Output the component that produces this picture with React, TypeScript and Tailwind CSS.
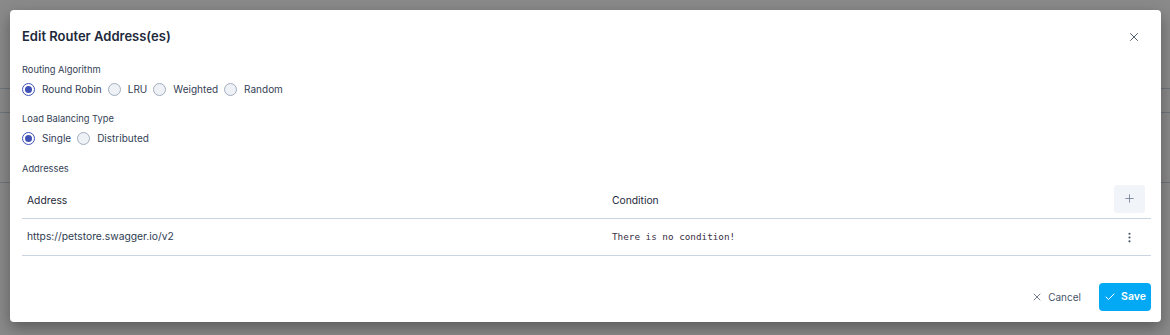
import { X, Plus, EllipsisVertical, Check } from "lucide-react";

const algorithms = ["Round Robin", "LRU", "Weighted", "Random"];
const balancing = ["Single", "Distributed"];

function Radio({ label, checked }: { label: string; checked?: boolean }) {
  return (
    <label className="flex items-center gap-[7px] mr-[6px]">
      <span
        className={
          checked
            ? "w-[13px] h-[13px] rounded-full border border-[#3f51b5] bg-white flex items-center justify-center"
            : "w-[13px] h-[13px] rounded-full border border-[#a3adbd] bg-[#eef2f7]"
        }
      >
        {checked && <span className="w-[7px] h-[7px] rounded-full bg-[#3f51b5]" />}
      </span>
      <span className="text-[10px] text-[#334155]">{label}</span>
    </label>
  );
}

export default function App() {
  return (
    <div className="relative w-[1170px] h-[335px] overflow-hidden bg-[#8a8a8a] font-['Inter',sans-serif]">
      {/* page behind the overlay */}
      <div className="absolute left-0 right-0 top-[88px] h-px bg-[#6f747b]" />
      <div className="absolute left-0 right-0 top-[112px] h-px bg-[#6f747b]" />
      <div className="absolute left-0 right-0 top-[182px] h-px bg-[#6f747b]" />

      <div className="relative ml-[10px] mt-[10px] w-[1151px] h-[312px] bg-white rounded-[4px] shadow-[0_6px_16px_rgba(0,0,0,0.35)] pl-[12px] pr-[10px]">
        {/* Header */}
        <div className="h-[54px] flex items-center justify-between">
          <h2 className="text-[13px] font-semibold text-[#1e293b]">Edit Router Address(es)</h2>
          <button className="mr-[10px] text-[#475569]">
            <X size={14} strokeWidth={1.6} />
          </button>
        </div>

        <div className="h-[12px] leading-[12px] text-[9.3px] text-[#334155]">Routing Algorithm</div>
        <div className="mt-[3px] h-[20px] flex items-center">
          {algorithms.map((a, i) => (
            <Radio key={a} label={a} checked={i === 0} />
          ))}
        </div>

        <div className="mt-[14px] h-[12px] leading-[12px] text-[9.3px] text-[#334155]">Load Balancing Type</div>
        <div className="mt-[3px] h-[20px] flex items-center">
          {balancing.map((a, i) => (
            <Radio key={a} label={a} checked={i === 0} />
          ))}
        </div>

        <div className="mt-[15px] h-[12px] leading-[12px] text-[9.3px] text-[#334155]">Addresses</div>

        {/* Table */}
        <div className="mt-[10px]">
          <div className="h-[34px] flex items-center border-b border-[#cbd5e1] pl-[5px] pr-[6px] pb-[1px]">
            <div className="w-[585px] text-[10.3px] text-[#1e293b]">Address</div>
            <div className="flex-1 text-[10.3px] text-[#1e293b]">Condition</div>
            <button className="w-[31px] h-[28px] rounded-[3px] bg-[#f1f5f9] flex items-center justify-center text-[#64748b] -mt-[5px]">
              <Plus size={13} strokeWidth={1.4} />
            </button>
          </div>
          <div className="h-[37px] flex items-center border-b border-[#cbd5e1] pl-[5px] pr-[6px]">
            <div className="w-[585px] text-[10.3px] text-[#2f3d52]">https://petstore.swagger.io/v2</div>
            <div className="flex-1 text-[9.3px] text-[#3a2f45] font-['DejaVu_Sans_Mono',monospace]">There is no condition!</div>
            <div className="w-[31px] flex justify-center text-[#475569]">
              <EllipsisVertical size={13} strokeWidth={2} />
            </div>
          </div>
        </div>

        {/* Footer */}
        <div className="mt-[27px] flex items-center justify-end">
          <button className="flex items-center gap-[5px] text-[10px] text-[#475569] mr-[18px]">
            <X size={12} strokeWidth={1.5} />
            Cancel
          </button>
          <button className="h-[28px] w-[52px] rounded-[4px] bg-[#03a9f4] text-white text-[10.5px] font-semibold flex items-center justify-center gap-[5px]">
            <Check size={12} strokeWidth={2} />
            Save
          </button>
        </div>
      </div>
    </div>
  );
}
